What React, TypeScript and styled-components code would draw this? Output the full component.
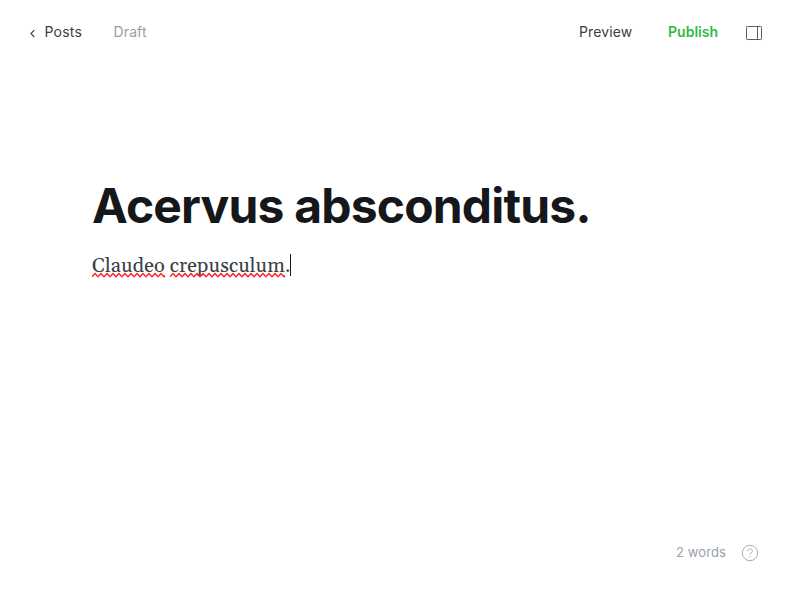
import React from "react";
import styled, { createGlobalStyle } from "styled-components";

const GlobalStyle = createGlobalStyle`
  * { box-sizing: border-box; }
  body { margin: 0; background: #fff; font-family: Inter, sans-serif; }
`;
const Screen = styled.div`
  width: 800px; height: 600px; display: flex; flex-direction: column; background: #fff; overflow: hidden;
`;
const Header = styled.header`
  height: 66px; padding: 0 38px 0 29px; display: flex; align-items: center; justify-content: space-between;
`;
const Group = styled.div`
  display: flex; align-items: center;
`;
const Label = styled.span<{ $color?: string; $weight?: number; $gap?: number; $size?: number; $spacing?: number }>`
  font-size: ${p => p.$size ?? 14}px; line-height: 20px; white-space: nowrap;
  padding-bottom: 2px;
  color: ${p => p.$color ?? "#394047"};
  font-weight: ${p => p.$weight ?? 400};
  letter-spacing: ${p => p.$spacing ?? 0}px;
  margin-left: ${p => p.$gap ?? 0}px;
`;
const PanelIcon = styled.svg`
  margin-left: 28px; display: block;
`;
const Editor = styled.main`
  flex: 1; padding: 111px 92px 0;
`;
const Title = styled.h1`
  margin: 0; font-size: 48px; line-height: 58px; font-weight: 700; letter-spacing: -0.82px; color: #15171a; white-space: nowrap;
`;
const Body = styled.p`
  margin: 15px 0 0; font-family: Georgia, Gelasio, "Liberation Serif", serif;
  font-size: 20px; line-height: 32px; color: #394047; white-space: pre; letter-spacing: 0.11px;
`;
const Misspelled = styled.span`
  position: relative; display: inline-block;
`;
const Squiggle = styled.svg`
  position: absolute; left: 0; top: 22px; width: 100%; height: 6px;
`;
const Caret = styled.span`
  display: inline-block; vertical-align: -4px; width: 1px; height: 22px; background: #15171a;
`;
const Footer = styled.footer`
  height: 94px; padding: 0 41px; display: flex; justify-content: flex-end; align-items: center; gap: 15px;
`;

const wave = "M0 4.7" + Array.from({ length: 30 }, () => "l3-3.2 3 3.2").join("");

function Word({ children }: { children: string }) {
  return (
    <Misspelled>
      {children}
      <Squiggle fill="none" stroke="#f22" strokeWidth="1.45"><path d={wave} /></Squiggle>
    </Misspelled>
  );
}

export default function App() {
  return (
    <Screen>
      <GlobalStyle />
      <Header>
        <Group>
          <svg width="7" height="9" viewBox="0 0 7 9" fill="none" stroke="#394047" strokeWidth="1.2"><path d="M5.3 1.2 2 4.6l3.3 3.4" /></svg>
          <Label $gap={8.5} $spacing={0.2}>Posts</Label>
          <Label $gap={31.6} $color="#95a1ad" $spacing={0.1}>Draft</Label>
        </Group>
        <Group>
          <Label $spacing={0.12}>Preview</Label>
          <Label $gap={35.8} $color="#30b943" $weight={600}>Publish</Label>
          <PanelIcon width="16" height="15" viewBox="0 0 16 15" fill="none" stroke="#5b6168"><rect x=".5" y=".5" width="15" height="13" rx=".7" /><path d="M11.5.5v13" /></PanelIcon>
        </Group>
      </Header>
      <Editor>
        <Title>Acervus absconditus.</Title>
        <Body><Word>Claudeo</Word>{" "}<Word>crepusculum</Word>.<Caret /></Body>
      </Editor>
      <Footer>
        <Label $color="#95a1ad" $size={13} $spacing={0.1}>2 words</Label>
        <svg width="18" height="18" viewBox="0 0 18 18" fill="none" stroke="#a5afba"><circle cx="9" cy="9" r="7.7" /><path d="M6.6 7.2c0-3 4.8-3 4.8 0 0 1.7-2.4 1.6-2.4 3.3M9 11.9v1.3" /></svg>
      </Footer>
    </Screen>
  );
}
